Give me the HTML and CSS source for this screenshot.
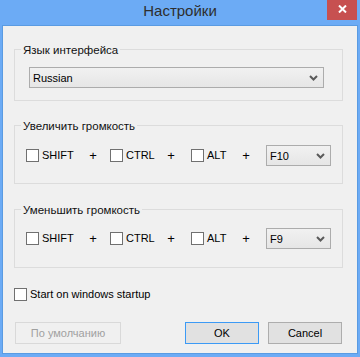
FILE: index.html
```html
<!DOCTYPE html>
<html lang="ru">
<head>
<meta charset="utf-8">
<title>Настройки</title>
<link rel="stylesheet" href="styles.css">
</head>
<body>
<div class="window">
  <div class="titlebar">
    <span class="title">Настройки</span>
    <span class="close"><svg width="9" height="8" viewBox="0 0 9 8"><path d="M1 0.5 L8 7.5 M8 0.5 L1 7.5" stroke="#fff" stroke-width="2" fill="none"/></svg></span>
  </div>
  <div class="client">
    <div class="group g1">
      <div class="legend">Язык интерфейса</div>
      <div class="body">
        <div class="select wide"><span>Russian</span><svg class="chev" width="9" height="6" viewBox="0 0 9 6"><path d="M1 1 L4.5 4.5 L8 1" stroke="#5a5a5a" stroke-width="2" fill="none"/></svg></div>
      </div>
    </div>
    <div class="group g2">
      <div class="legend">Увеличить громкость</div>
      <div class="body hk-row">
        <label class="cb shift"><span class="box"></span>SHIFT</label>
        <span class="plus">+</span>
        <label class="cb ctrl"><span class="box"></span>CTRL</label>
        <span class="plus">+</span>
        <label class="cb alt"><span class="box"></span>ALT</label>
        <span class="plus">+</span>
        <div class="select key"><span>F10</span><svg class="chev" width="9" height="6" viewBox="0 0 9 6"><path d="M1 1 L4.5 4.5 L8 1" stroke="#5a5a5a" stroke-width="2" fill="none"/></svg></div>
      </div>
    </div>
    <div class="group g3">
      <div class="legend">Уменьшить громкость</div>
      <div class="body hk-row">
        <label class="cb shift"><span class="box"></span>SHIFT</label>
        <span class="plus">+</span>
        <label class="cb ctrl"><span class="box"></span>CTRL</label>
        <span class="plus">+</span>
        <label class="cb alt"><span class="box"></span>ALT</label>
        <span class="plus">+</span>
        <div class="select key"><span>F9</span><svg class="chev" width="9" height="6" viewBox="0 0 9 6"><path d="M1 1 L4.5 4.5 L8 1" stroke="#5a5a5a" stroke-width="2" fill="none"/></svg></div>
      </div>
    </div>
    <label class="cb startup"><span class="box"></span>Start on windows startup</label>
    <div class="footer">
      <button class="btn disabled" disabled>По умолчанию</button>
      <span class="spacer"></span>
      <button class="btn default">OK</button>
      <button class="btn cancel">Cancel</button>
    </div>
  </div>
</div>
</body>
</html>
```
FILE: styles.css
```css
* { box-sizing: border-box; }
html, body { margin: 0; padding: 0; }
body {
  font-family: "Liberation Sans", Arial, sans-serif;
  font-size: 11px;
  color: #000;
}
.window {
  width: 360px;
  height: 357px;
  background: #6cabf5;
  display: flex;
  flex-direction: column;
}
.titlebar {
  height: 25px;
  position: relative;
  display: flex;
  justify-content: center;
  align-items: flex-start;
}
.title {
  font-size: 15px;
  line-height: 22px;
  color: #2e2e2e;
}
.close {
  position: absolute;
  top: 0;
  right: 3px;
  width: 30px;
  height: 20px;
  background: #c75050;
  display: flex;
  align-items: center;
  justify-content: center;
  padding-bottom: 3px;
}
.close svg { display: block; }
.client {
  flex: 1;
  margin: 0 2px 3px 2px;
  border: 1px solid #5a9be2;
  background: #f0f0f0;
  padding: 23px 14px 0 11px;
  display: flex;
  flex-direction: column;
}
.group {
  border: 1px solid #dcdcdc;
}
.legend {
  margin: -8px 0 0 6px;
  padding: 0 2px;
  width: max-content;
  background: #f0f0f0;
  line-height: 16px;
  font-size: 11.5px;
  color: #111;
}
.g1 .body { padding: 9px 18px 12px 14px; }
.g2 { margin-top: 24px; }
.g2 .body { padding: 11px 0 17px 11px; }
.g3 { margin-top: 25px; }
.g3 .body { padding: 10px 0 18px 11px; }
.select {
  height: 21px;
  border: 1px solid #acacac;
  background: linear-gradient(#f1f1f1, #e6e6e6);
  display: flex;
  align-items: center;
  justify-content: space-between;
  padding: 0 5px 0 3px;
  font-size: 11px;
}
.select .chev { display: block; }
.hk-row {
  display: flex;
  align-items: center;
}
.cb {
  display: flex;
  align-items: center;
  height: 13px;
  line-height: 13px;
}
.box {
  width: 13px;
  height: 13px;
  border: 1px solid #707070;
  background: #fff;
  margin-right: 3px;
  flex: none;
}
.shift { width: 58px; }
.ctrl { width: 52px; margin-left: 8px; }
.alt { width: 46px; margin-left: 11px; }
.plus {
  width: 18px;
  text-align: center;
  font-size: 13px;
}
.key {
  width: 65px;
  margin-left: 11px;
}
.startup {
  margin-top: 20px;
  margin-left: 0;
}
.footer {
  margin-top: 21px;
  display: flex;
  padding-left: 1px;
  padding-right: 1px;
}
.spacer { flex: 1; }
.btn {
  width: 74px;
  height: 22px;
  font-family: "Liberation Sans", Arial, sans-serif;
  font-size: 11px;
  color: #000;
  background: #e1e1e1;
  border: 1px solid #adadad;
  padding: 0;
}
.btn.disabled {
  width: 106px;
  color: #a0a0a0;
  background: #f0f0f0;
  border-color: #d9d9d9;
}
.btn.default {
  border-color: #3c9af5;
}
.btn.cancel {
  margin-left: 9px;
}
```
